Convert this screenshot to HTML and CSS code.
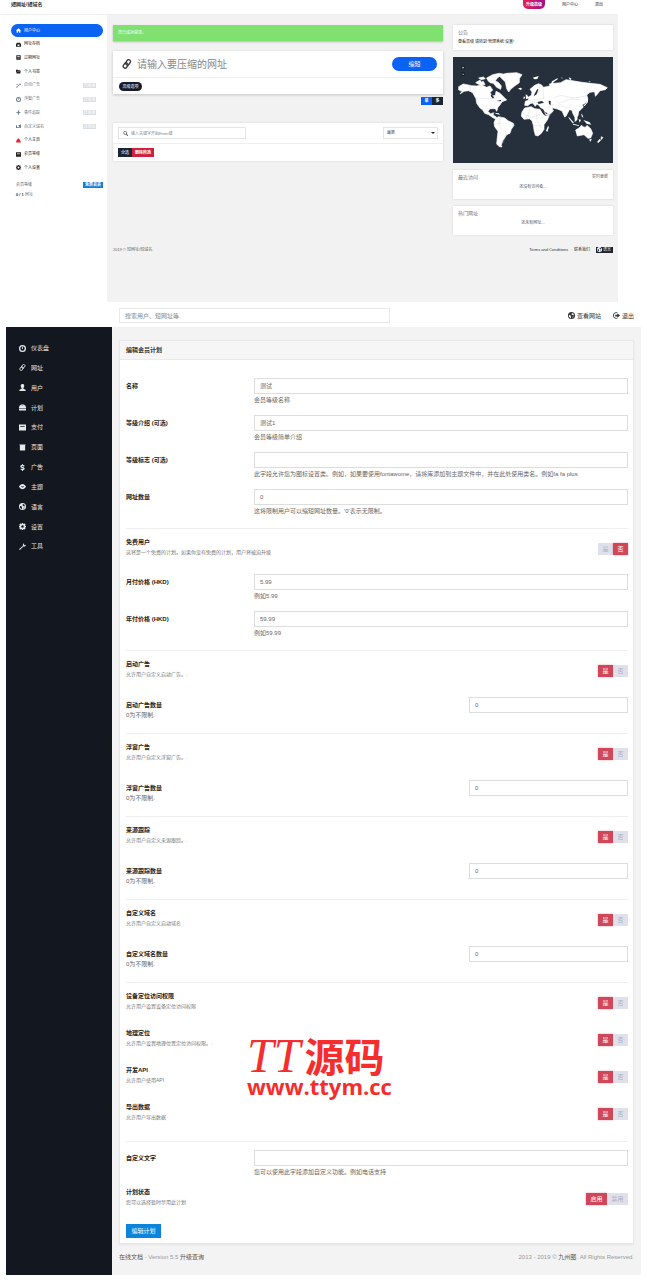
FILE: index.html
```html
<!DOCTYPE html>
<html lang="zh-CN">
<head>
  <meta charset="UTF-8" />
  <meta name="viewport" content="width=device-width, initial-scale=1" />
  <title>短网址/短域名</title>
  <link rel="stylesheet" href="styles.css">
</head>
<body>
  <svg class="sprite" aria-hidden="true">
    <symbol id="i-home" viewBox="0 0 16 16"><path d="M8 1 0 8h2v7h4v-5h4v5h4V8h2z"/></symbol>
    <symbol id="i-archive" viewBox="0 0 16 16"><path d="M3 2h10l3 5v8H0V7zm2 6v5h6V8z"/></symbol>
    <symbol id="i-list" viewBox="0 0 16 16"><path d="M1 1h14v14H1zm3 3v2h8V4zm0 4v1h8V8zm0 3v1h8v-1z"/></symbol>
    <symbol id="i-folder" viewBox="0 0 16 16"><path d="M0 2h6l2 2h6v3H4l-4 6zM4 8h12l-3 6H1z"/></symbol>
    <symbol id="i-random" viewBox="0 0 16 16"><path d="M0 3h6v2H0zm0 9h3l7-9h2V0l4 4-4 4V5h-1l-7 9H0z"/></symbol>
    <symbol id="i-gauge" viewBox="0 0 16 16"><path fill-rule="evenodd" d="M8 0a8 8 0 1 0 0 16A8 8 0 0 0 8 0zm0 3a5 5 0 1 1 0 10A5 5 0 0 1 8 3zM7 4h2v5H7z"/></symbol>
    <symbol id="i-target" viewBox="0 0 16 16"><path d="M7 0h2v4l3 3h4v2h-4l-3 3v4H7v-4L4 9H0V7h4l3-3z"/></symbol>
    <symbol id="i-sync" viewBox="0 0 16 16"><path d="M0 4h3v6h5v3H0zm16 8H6L14 3V1h2zM8 3h4v3H8z"/></symbol>
    <symbol id="i-fire" viewBox="0 0 16 16"><path d="M8 1c3 2 3 4 5 5l3 8H0l2-8c2 0 3-3 6-5z"/></symbol>
    <symbol id="i-card" viewBox="0 0 16 16"><path fill-rule="evenodd" d="M0 1h16v14H0zm3 4v2h10V5z"/></symbol>
    <symbol id="i-cog" viewBox="0 0 16 16"><path fill-rule="evenodd" d="M7 0h2l1 2 3-1 2 2-1 3 2 1v2l-2 1 1 3-2 2-3-1-1 2H7l-1-2-3 1-2-2 1-3-2-1V7l2-1-1-3 2-2 3 1zm1 5a3 3 0 1 0 0 6 3 3 0 0 0 0-6z"/></symbol>
    <symbol id="i-link" viewBox="0 0 16 16"><g fill="none" stroke="currentColor" stroke-width="2"><rect x="7" y="1" width="6" height="9" rx="3" transform="rotate(35 10 5)"/><rect x="3" y="6" width="6" height="9" rx="3" transform="rotate(35 6 10)"/></g></symbol>
    <symbol id="i-search" viewBox="0 0 16 16"><circle cx="7" cy="6" r="5" fill="none" stroke="currentColor" stroke-width="2"/><path d="m10 11 2-2 4 5-2 2z"/></symbol>
    <symbol id="i-user" viewBox="0 0 16 16"><path d="M8 0c5 0 5 6 2 9v2l5 2v3H1v-3l5-2V9C3 6 3 0 8 0z"/></symbol>
    <symbol id="i-case" viewBox="0 0 16 16"><path fill-rule="evenodd" d="M4 3V1h8v2h2l2 4v2H0V7l2-4zm2 0h4V2H6zM0 10h16v5H0z"/></symbol>
    <symbol id="i-page" viewBox="0 0 16 16"><path d="M1 1h14v2h-1v12H2V3H1z"/></symbol>
    <symbol id="i-dollar" viewBox="0 0 16 16"><path d="M7 0h2v2c2 0 3 1 4 2l-2 2C9 4 6 4 6 5c0 2 7 1 7 6 0 2-2 3-4 3v2H7v-2c-2 0-3-1-4-2l2-2c2 2 5 2 5 1 0-2-7-1-7-6 0-2 2-3 4-3z"/></symbol>
    <symbol id="i-eye" viewBox="0 0 16 16"><path fill-rule="evenodd" d="M0 8c4-8 12-8 16 0-4 8-12 8-16 0zm5-1a3 3 0 0 0 6 0l-3 1z"/></symbol>
    <symbol id="i-globe" viewBox="0 0 16 16"><path fill-rule="evenodd" d="M8 0a8 8 0 1 0 0 16A8 8 0 0 0 8 0zm1 2 4 2v4l-3-1-2-2zM3 6l3 2 1 3-1 3-4-4zm8 4 2 1-3 3z"/></symbol>
    <symbol id="i-wrench" viewBox="0 0 16 16"><path d="M11 0 9 3v3l-9 8 2 2 8-8h4l2-4-3 1-2-2z"/></symbol>
    <symbol id="i-exit" viewBox="0 0 16 16"><path d="M10 1v2C6 1 2 4 2 8s4 7 8 5v2C5 17 0 13 0 8s5-9 10-7zm0 2 6 5-6 5v-3H5V6h5z"/></symbol>
  </svg>

  <!-- user dashboard -->
  <div class="site">
    <header class="site-header">
      <a class="brand" href="#">短网址/短域名</a>
      <nav class="site-nav">
        <a class="upgrade" href="#">升级高级</a>
        <a href="#">用户中心</a>
        <a href="#">退出</a>
      </nav>
    </header>

    <div class="site-body">
      <aside class="site-side">
        <ul class="side-menu">
          <li><a class="active" href="#"><svg class="icon"><use href="#i-home"/></svg>用户中心</a></li>
          <li><a href="#"><svg class="icon"><use href="#i-archive"/></svg>网址存档</a></li>
          <li><a href="#"><svg class="icon"><use href="#i-list"/></svg>过期网址</a></li>
          <li><a href="#"><svg class="icon"><use href="#i-folder"/></svg>个人书签</a></li>
          <li><a class="locked" href="#"><svg class="icon"><use href="#i-random"/></svg>启动广告<span class="pro">高级版</span></a></li>
          <li><a class="locked" href="#"><svg class="icon"><use href="#i-gauge"/></svg>浮窗广告<span class="pro">高级版</span></a></li>
          <li><a class="locked" href="#"><svg class="icon"><use href="#i-target"/></svg>事件追踪<span class="pro">高级版</span></a></li>
          <li><a class="locked" href="#"><svg class="icon"><use href="#i-sync"/></svg>自定义域名<span class="pro">高级版</span></a></li>
          <li><a href="#"><svg class="icon hot"><use href="#i-fire"/></svg>个人主页</a></li>
          <li><a href="#"><svg class="icon"><use href="#i-card"/></svg>会员等级</a></li>
          <li><a href="#"><svg class="icon"><use href="#i-cog"/></svg>个人设置</a></li>
        </ul>
        <div class="level"><span>会员等级</span><span class="level-tag">免费会员</span></div>
        <p class="quota"><strong>0 / 1</strong> 网址</p>
      </aside>

      <div class="site-content">
        <main class="site-main">
          <div class="alert">您已成功登录。</div>

          <form class="box shorten">
            <div class="shorten-row">
              <svg class="icon"><use href="#i-link"/></svg>
              <input type="text" aria-label="网址" placeholder="请输入要压缩的网址">
              <button type="button" class="btn-shorten">缩短</button>
            </div>
            <div class="shorten-options">
              <button type="button" class="btn-options">高级选项</button>
            </div>
          </form>

          <div class="mode">
            <button type="button" class="on">单</button><button type="button">多</button>
          </div>

          <section class="box links">
            <div class="links-row">
              <div class="search">
                <svg class="icon"><use href="#i-search"/></svg>
                <input type="text" aria-label="搜索" placeholder="输入关键字开始Enter键">
              </div>
              <div class="sort">
                <select aria-label="排序"><option>最新</option></select>
              </div>
            </div>
            <div class="links-actions">
              <button type="button">全选</button><button type="button" class="danger">删除所选</button>
            </div>
          </section>
        </main>

        <aside class="widgets">
          <section class="box notice">
            <h3>公告</h3>
            <p>查看高级 请转到‘管理系统’设置!</p>
          </section>

          <svg class="map" viewBox="39 21 480 317" role="img">
            <g fill="#fff" stroke="#fff" stroke-width="2" stroke-linejoin="round">
              <path d="M56 110l14-8 25 5 15 1 15-3 15 7 10-4 8 12-8 8 8 10 8-2 2-12 12 6 12 12 8 8-14 5-6 10-6 7-4 12-4-8h-16l-6 8 8 8 8-4v8l8 4 2 8-10-4-14-10-12-4-6-10-8-6-10-14-2-14-10-18-12-6-14 2-12 8 6-8-10-4z"/>
              <path d="M107 98l13-8 4 6 6-2 5 10-15 1zM116 84l14-3 6 5-12 3zM140 84l18-10 20-4 10 2-16 12-6 8 10 6 8 10-2 10-12-6-10-12-10-2-6-6z"/>
              <path d="M176 76l24-6 30-2 16 6-8 12v12l-14 10-12 10-6 8-6-10-4-20-10-10z"/>
              <path d="M168 204l8-4 18 4 10 8 16 8 2 6-8 12-4 12-10 4-6 10-6 8-4 14 2 5-8-1-8-8 2-20 2-18-10-14-2-12z"/>
              <path d="M254 174l20-4 10 6 16 2 8 14 8 6 12-2-6 14-10 14v14l-8 12-10 8-8-2-4-16-2-14-4-14-8-6-16 2-8-10 2-12z"/>
              <path d="M254 166l2-12 10-4-2-8 10-6 2-10-6-8 14-12 12-5 10 5 4 6 20-4-2-6 16-2 18-2 16-9 12 2 30 5 30 4 30 3 22 10-6 6-16 3-8 11-6 6-2-14-14 2-10 8 4 12-8 12-10 6 4 6-14 14-2 12-8 8-8-16-2-8-8-2-10 20-4 2-8-18-14-6-16-4 4 10-10 10-12 2-8-18-8-4-6-8-6-2-4 6-8-10-8 2-6 6z"/>
              <path d="M407 240l13-8 4-6 8 6 6-1 3-5 11 10 6 14-6 14-8 1-12-11-20 4zM449 269l5-1-3 6zM484 260l5 3-6 6zM479 268l3 3-8 7-1-3z"/>
            </g>
            <g fill="#fff">
              <path d="M386 200l16 18-4 2-12-16zM404 204l9-6-1 12-8 6zM399 221l18 5v2l-18-4zM416 208l7 1-4 9zM430 210l18 6 6 8-14-3zM424 190l4 6 2 8-5-5zM440 148l4-2 0 10-10 12-4-1 8-8zM324 228l3 3-5 15-4-4zM257 133l5 3 4 9-8 3zM251 140l4 0-1 6-4 0zM234 115l8-2 5 4-6 3zM278 83l18-5-4 9-8 1zM331 107l5-13 16-9 2 2-13 9-5 12zM386 82l9 4-5 5zM162 188l14 2 4 4-8-1zM364 82l4 2-2 2zM445 94l8 1-4 2z"/>
            </g>
            <g fill="#26303d">
              <path d="M284 131l8-14 3 2-5 14-9 6zM292 156l14-3 6 5-16 4zM326 152l6 1 0 13-5-4zM308 177l7 10 8 2-3 4-12-12zM154 132l8 10-3 4-7-8zM170 153l14-4-2 5z"/>
            </g>
            <path fill="none" stroke="#c4c8cc" stroke-width="1" d="M108 145h52l10 4M91 107v16M246 188l28 16 22-10 20 14M268 176l-2 26M288 177l2 32 14 26M282 226l24 2M256 204l16-22M180 202l-4 24 22 20-8 32M164 222l20-2M340 144l22-8 38 8 38-6M352 152l12 16 22 6 8-12M362 158l34-12 24 4M282 148l12 2 18-6M276 154l16 4M322 174l18-12M300 108l-6 24M308 112l4 36"/>
            <g fill="#1a212b"><path d="M64 46h10v12H64zM64 66h10v12H64z"/></g>
            <path stroke="#ddd" stroke-width="2" d="M67 53h5M69 50v5M67 73h5"/>
          </svg>

          <section class="box recent">
            <header><h3>最近访问</h3><a href="#">实时更新</a></header>
            <p>还没有访问者...</p>
          </section>
          <section class="box recent">
            <header><h3>热门网址</h3></header>
            <p>还未有网址...</p>
          </section>
        </aside>

        <footer class="site-footer">
          <span>2019 © 短网址/短域名.</span>
          <nav>
            <a href="#">Terms and Conditions</a>
            <a href="#">联系我们</a>
            <a class="lang" href="#"><svg class="icon"><use href="#i-globe"/></svg>语言</a>
          </nav>
        </footer>
      </div>
    </div>
  </div>

  <!-- admin panel -->
  <div class="admin">
    <header class="admin-header">
      <input type="text" aria-label="搜索" placeholder="搜索用户、短网址等.">
      <nav>
        <a href="#"><svg class="icon"><use href="#i-globe"/></svg>查看网站</a>
        <a href="#"><svg class="icon"><use href="#i-exit"/></svg>退出</a>
      </nav>
    </header>

    <div class="admin-body">
      <aside class="admin-side">
        <ul>
          <li><a href="#"><svg class="icon"><use href="#i-gauge"/></svg>仪表盘</a></li>
          <li><a href="#"><svg class="icon"><use href="#i-link"/></svg>网址</a></li>
          <li><a href="#"><svg class="icon"><use href="#i-user"/></svg>用户</a></li>
          <li><a href="#"><svg class="icon"><use href="#i-case"/></svg>计划</a></li>
          <li><a href="#"><svg class="icon"><use href="#i-card"/></svg>支付</a></li>
          <li><a href="#"><svg class="icon"><use href="#i-page"/></svg>页面</a></li>
          <li><a href="#"><svg class="icon"><use href="#i-dollar"/></svg>广告</a></li>
          <li><a href="#"><svg class="icon"><use href="#i-eye"/></svg>主题</a></li>
          <li><a href="#"><svg class="icon"><use href="#i-globe"/></svg>语言</a></li>
          <li><a href="#"><svg class="icon"><use href="#i-cog"/></svg>设置</a></li>
          <li><a href="#"><svg class="icon"><use href="#i-wrench"/></svg>工具</a></li>
        </ul>
      </aside>

      <main class="admin-main">
        <form class="panel">
          <h2>编辑会员计划</h2>
          <div class="panel-body">
            <div class="group first">
              <div class="field">
                <label for="name">名称</label>
                <div><input type="text" id="name" value="测试"><p>会员等级名称</p></div>
              </div>
              <div class="field">
                <label for="intro">等级介绍 (可选)</label>
                <div><input type="text" id="intro" value="测试1"><p>会员等级简单介绍</p></div>
              </div>
              <div class="field">
                <label for="badge">等级标志 (可选)</label>
                <div><input type="text" id="badge"><p>此字段允许您为图标设置类。例如，如果要使用fontawome，请将库添加到主题文件中，并在此处使用类名。例如fa fa plus</p></div>
              </div>
              <div class="field">
                <label for="urls">网址数量</label>
                <div><input type="text" id="urls" value="0"><p>这将限制用户可以缩短网址数量。'0'表示无限制。</p></div>
              </div>
            </div>

            <div class="group">
              <div class="switch-row">
                <div><h4>免费用户</h4><p>这将是一个免费的计划。如果你没有免费的计划，用户将被迫升级</p></div>
                <div class="switch"><button type="button">是</button><button type="button" class="on">否</button></div>
              </div>
              <div class="field">
                <label for="monthly">月付价格 (HKD)</label>
                <div><input type="text" id="monthly" value="5.99"><p>例如5.99</p></div>
              </div>
              <div class="field">
                <label for="yearly">年付价格 (HKD)</label>
                <div><input type="text" id="yearly" value="59.99"><p>例如59.99</p></div>
              </div>
            </div>

            <div class="group">
              <div class="switch-row">
                <div><h4>启动广告</h4><p>允许用户自定义启动广告。.</p></div>
                <div class="switch"><button type="button" class="on">是</button><button type="button">否</button></div>
              </div>
              <div class="count-row">
                <div><label for="splash">启动广告数量</label><p>0为不限制.</p></div>
                <input type="text" id="splash" value="0">
              </div>
            </div>

            <div class="group">
              <div class="switch-row">
                <div><h4>浮窗广告</h4><p>允许用户自定义浮窗广告。.</p></div>
                <div class="switch"><button type="button" class="on">是</button><button type="button">否</button></div>
              </div>
              <div class="count-row">
                <div><label for="overlay">浮窗广告数量</label><p>0为不限制.</p></div>
                <input type="text" id="overlay" value="0">
              </div>
            </div>

            <div class="group">
              <div class="switch-row">
                <div><h4>来源跟踪</h4><p>允许用户自定义来源跟踪。.</p></div>
                <div class="switch"><button type="button" class="on">是</button><button type="button">否</button></div>
              </div>
              <div class="count-row">
                <div><label for="pixels">来源跟踪数量</label><p>0为不限制.</p></div>
                <input type="text" id="pixels" value="0">
              </div>
            </div>

            <div class="group">
              <div class="switch-row">
                <div><h4>自定义域名</h4><p>允许用户自定义启动域名</p></div>
                <div class="switch"><button type="button" class="on">是</button><button type="button">否</button></div>
              </div>
              <div class="count-row">
                <div><label for="domains">自定义域名数量</label><p>0为不限制.</p></div>
                <input type="text" id="domains" value="0">
              </div>
            </div>

            <div class="group">
              <div class="switch-row">
                <div><h4>设备定位访问权限</h4><p>允许用户设置设备定位访问权限</p></div>
                <div class="switch"><button type="button" class="on">是</button><button type="button">否</button></div>
              </div>
              <div class="switch-row">
                <div><h4>地理定位</h4><p>允许用户设置地理位置定位访问权限。.</p></div>
                <div class="switch"><button type="button" class="on">是</button><button type="button">否</button></div>
              </div>
              <div class="switch-row">
                <div><h4>开发API</h4><p>允许用户使用API</p></div>
                <div class="switch"><button type="button" class="on">是</button><button type="button">否</button></div>
              </div>
              <div class="switch-row">
                <div><h4>导出数据</h4><p>允许用户导出数据</p></div>
                <div class="switch"><button type="button" class="on">是</button><button type="button">否</button></div>
              </div>
            </div>

            <div class="group last">
              <div class="field">
                <label for="custom">自定义文字</label>
                <div><input type="text" id="custom"><p>您可以使用此字段添加自定义功能。例如电话支持</p></div>
              </div>
              <div class="switch-row">
                <div><h4>计划状态</h4><p>您可以选择暂时禁用此计划</p></div>
                <div class="switch wide"><button type="button" class="on">启用</button><button type="button">禁用</button></div>
              </div>
              <button type="button" class="btn-save">编辑计划</button>
            </div>
          </div>
          <div class="stamp">
            <div class="stamp-name"><i>TT</i>源码</div>
            <div class="stamp-url">www.ttym.cc</div>
          </div>
        </form>

        <footer class="admin-footer">
          <span><a href="#">在线文档</a> - Version 5.5 <a href="#">升级查询</a></span>
          <span>2013 - 2019 © <a href="#">九州图</a>. All Rights Reserved.</span>
        </footer>
      </main>
    </div>
  </div>
</body>
</html>
```

FILE: styles.css
```css
* {
  box-sizing: border-box;
}
body {
  margin: 0;
  background: #fff;
  color: #333;
  font-family: "Liberation Sans", "Noto Sans CJK SC", sans-serif;
  font-size: 6px;
  line-height: 10px;
}
h2, h3, h4, p, ul {
  margin: 0;
  padding: 0;
}
ul {
  list-style: none;
}
a {
  color: inherit;
  text-decoration: none;
}
input, button, select {
  font: inherit;
  color: inherit;
  margin: 0;
  padding: 0;
  border: 0;
  border-radius: 0;
  background: none;
}
input {
  min-width: 0;
}
input::placeholder {
  color: #888;
}
.sprite {
  display: none;
}
.icon {
  width: 5px;
  height: 5px;
  flex: none;
  fill: currentColor;
}

/* user dashboard */
.site {
  margin-right: 29px;
  font-size: 4px;
  line-height: 6px;
}
.site-header {
  display: flex;
  justify-content: space-between;
  height: 15px;
  padding: 0 15px 0 11px;
  border-bottom: 1px solid #eee;
}
.brand {
  font-size: 5px;
  line-height: 9px;
  font-weight: bold;
}
.site-nav {
  display: flex;
  gap: 17px;
  line-height: 9px;
  color: #222;
}
.upgrade {
  width: 22px;
  height: 9px;
  border-radius: 0 0 5px 5px;
  background: linear-gradient(90deg, #e8204e, #a01090);
  color: #fff;
  font-weight: bold;
  text-align: center;
}
.site-body {
  display: grid;
  grid-template-columns: 107px 1fr;
}
.site-side {
  padding: 9px 4px 0 11px;
}
.side-menu {
  display: grid;
  grid-auto-rows: 1fr;
  height: 151px;
}
.side-menu a {
  display: flex;
  align-items: center;
  gap: 3px;
  height: 13px;
  padding: 0 7px 0 5px;
  border-radius: 7px;
  color: #222;
}
.side-menu .active {
  background: #0a63f2;
  color: #fff;
}
.side-menu .locked {
  color: #66788c;
}
.side-menu .hot {
  color: #e0243c;
}
.pro {
  width: 13px;
  height: 5px;
  margin-left: auto;
  background: #d6dae2;
  color: #fff;
  line-height: 5px;
  text-align: center;
}
.level {
  display: flex;
  justify-content: space-between;
  margin: 7px 0 4px 5px;
  color: #4c6076;
}
.level-tag {
  width: 20px;
  background: #0d7fe0;
  color: #fff;
  font-weight: bold;
  text-align: center;
}
.quota {
  margin-left: 5px;
  color: #777;
}
.quota strong {
  color: #333;
}
.site-content {
  display: grid;
  grid-template-columns: 1fr 160px;
  column-gap: 10px;
  padding: 10px 5px 49px 6px;
  background: #f2f2f2;
}
.box {
  background: #fff;
  box-shadow: 0 0 2px rgba(0, 0, 0, 0.12);
}
.alert {
  height: 16px;
  padding-left: 5px;
  background: #80e070;
  color: #fff;
  line-height: 16px;
  box-shadow: 0 1px 2px rgba(0, 0, 0, 0.25);
}
.shorten {
  margin-top: 10px;
  box-shadow: 0 1px 3px rgba(0, 0, 0, 0.2);
}
.shorten-row {
  display: flex;
  align-items: center;
  gap: 5px;
  height: 26px;
  padding: 0 6px 0 9px;
}
.shorten-row .icon {
  width: 10px;
  height: 10px;
}
.shorten-row input {
  flex: 1;
  height: 16px;
  font-size: 10px;
}
.btn-shorten {
  width: 45px;
  height: 14px;
  border-radius: 7px;
  background: #0a63f2;
  color: #fff;
  font-size: 6px;
}
.shorten-options {
  height: 17px;
  padding: 4px 6px;
  border-top: 1px solid #eee;
}
.btn-options {
  display: block;
  width: 23px;
  height: 9px;
  border-radius: 5px;
  background: #151c2b;
  color: #fff;
}
.mode {
  display: flex;
  justify-content: flex-end;
  margin: 3px 0 18px;
}
.mode button {
  width: 11px;
  height: 8px;
  background: #1b2534;
  color: #fff;
  font-weight: bold;
}
.mode .on {
  background: #0a63f2;
}
.links-row {
  display: flex;
  justify-content: space-between;
  height: 20px;
  padding: 4px 5px;
}
.search {
  display: flex;
  align-items: center;
  gap: 3px;
  width: 128px;
  padding-left: 4px;
  border: 1px solid #e4e4e4;
}
.search input {
  flex: 1;
  height: 10px;
}
.sort {
  position: relative;
  width: 55px;
  border: 1px solid #e4e4e4;
}
.sort::after {
  content: "";
  position: absolute;
  top: 4px;
  right: 2px;
  border: 2px solid transparent;
  border-top-color: #222;
  border-bottom: 0;
}
.sort select {
  display: block;
  width: 100%;
  height: 10px;
  padding-left: 3px;
  appearance: none;
}
.links-actions {
  display: flex;
  height: 18px;
  padding: 4px 5px;
  border-top: 1px solid #eee;
}
.links-actions button {
  width: 14px;
  height: 9px;
  background: #1b2534;
  color: #fff;
}
.links-actions .danger {
  width: 22px;
  background: #d0203c;
  font-weight: bold;
}
.widgets {
  display: flex;
  flex-direction: column;
  gap: 7px;
}
.widgets h3 {
  color: #777;
  font-size: 5px;
  font-weight: normal;
}
.notice {
  height: 25px;
  padding: 4px 5px;
}
.notice p {
  margin-top: 4px;
  color: #222;
}
.map {
  display: block;
  width: 100%;
  background: #26303d;
}
.recent {
  height: 29px;
  padding: 4px 5px;
  color: #555;
}
.recent header {
  display: flex;
  justify-content: space-between;
}
.recent p {
  margin-top: 4px;
  text-align: center;
}
.site-footer {
  grid-column: 1 / -1;
  display: flex;
  justify-content: space-between;
  margin-top: 12px;
  color: #666;
}
.site-footer nav {
  display: flex;
  gap: 6px;
  color: #333;
}
.lang {
  display: flex;
  align-items: center;
  gap: 1px;
  width: 17px;
  padding-left: 1px;
  background: #1b2534;
  color: #fff;
}

/* admin panel */
.admin {
  margin: 0 6px;
}
.admin-header {
  display: flex;
  justify-content: space-between;
  align-items: center;
  height: 25px;
  padding: 3px 7px 0 113px;
}
.admin-header input {
  width: 271px;
  height: 15px;
  padding: 0 5px;
  border: 1px solid #e8e8e8;
}
.admin-header nav {
  display: flex;
  gap: 12px;
}
.admin-header a {
  display: flex;
  align-items: center;
  gap: 2px;
}
.admin-header .icon,
.admin-side .icon {
  width: 7px;
  height: 7px;
}
.admin-body {
  display: grid;
  grid-template-columns: 106px 1fr;
}
.admin-side {
  padding: 12px 13px;
  background: #131720;
  color: #e6e8ea;
}
.admin-side ul {
  display: grid;
  grid-auto-rows: 1fr;
  height: 218px;
}
.admin-side a {
  display: flex;
  align-items: center;
  gap: 5px;
  height: 19px;
}
.admin-main {
  padding: 13px 7px;
  background: #f3f3f3;
}
.panel {
  position: relative;
  background: #fff;
  border: 1px solid #e8e8e8;
  box-shadow: 0 1px 2px rgba(0, 0, 0, 0.06);
}
.panel h2 {
  padding-left: 6px;
  border-bottom: 1px solid #eaeaea;
  background: #f6f6f6;
  font-size: 6px;
  line-height: 18px;
}
.panel-body {
  padding: 0 5px 0 6px;
}
.panel input {
  display: block;
  width: 100%;
  height: 16px;
  padding: 0 5px;
  border: 1px solid #ddd;
  color: #666;
}
.group {
  padding: 8px 0 2px;
  border-top: 1px solid #eee;
}
.group.first {
  padding-top: 18px;
  border-top: 0;
}
.group.last {
  padding-bottom: 5px;
}
.panel label,
.panel h4 {
  color: #222;
  font-size: 6px;
  font-weight: bold;
}
.field {
  display: grid;
  grid-template-columns: 128px 1fr;
  height: 37px;
}
.field label {
  line-height: 16px;
}
.field p {
  margin-top: 1px;
  color: #666;
  white-space: nowrap;
}
.switch-row {
  display: flex;
  justify-content: space-between;
  height: 37px;
}
.switch-row p {
  color: #777;
  font-size: 5px;
}
.switch {
  display: flex;
  padding-top: 6px;
}
.switch button {
  width: 15px;
  height: 12px;
  background: #e0e0ea;
  color: #a9b2c6;
}
.switch .on {
  background: #d04759;
  color: #fff;
  box-shadow: 0 0 2px rgba(208, 71, 89, 0.5);
}
.switch.wide button {
  width: 21px;
}
.count-row {
  display: grid;
  grid-template-columns: 1fr 159px;
  height: 35px;
  padding-top: 1px;
}
.count-row > div {
  padding-top: 3px;
}
.count-row label {
  display: block;
}
.count-row p {
  color: #666;
}
.btn-save {
  display: block;
  width: 35px;
  height: 14px;
  background: #0d84dc;
  color: #fff;
}
.stamp {
  position: absolute;
  left: 127px;
  bottom: 144px;
  color: #f52d2d;
}
.stamp-name {
  display: flex;
  align-items: baseline;
  gap: 4px;
  height: 34px;
  font-size: 40px;
  line-height: 34px;
  font-weight: bold;
}
.stamp-name i {
  font-family: "Liberation Serif", serif;
  font-size: 48px;
  font-weight: normal;
}
.stamp-url {
  font-family: "Open Sans", sans-serif;
  font-size: 22px;
  line-height: 26px;
  font-weight: bold;
}
.admin-footer {
  display: flex;
  justify-content: space-between;
  padding: 8px 0 0;
  color: #999;
}
.admin-footer a {
  color: #555;
}
```
